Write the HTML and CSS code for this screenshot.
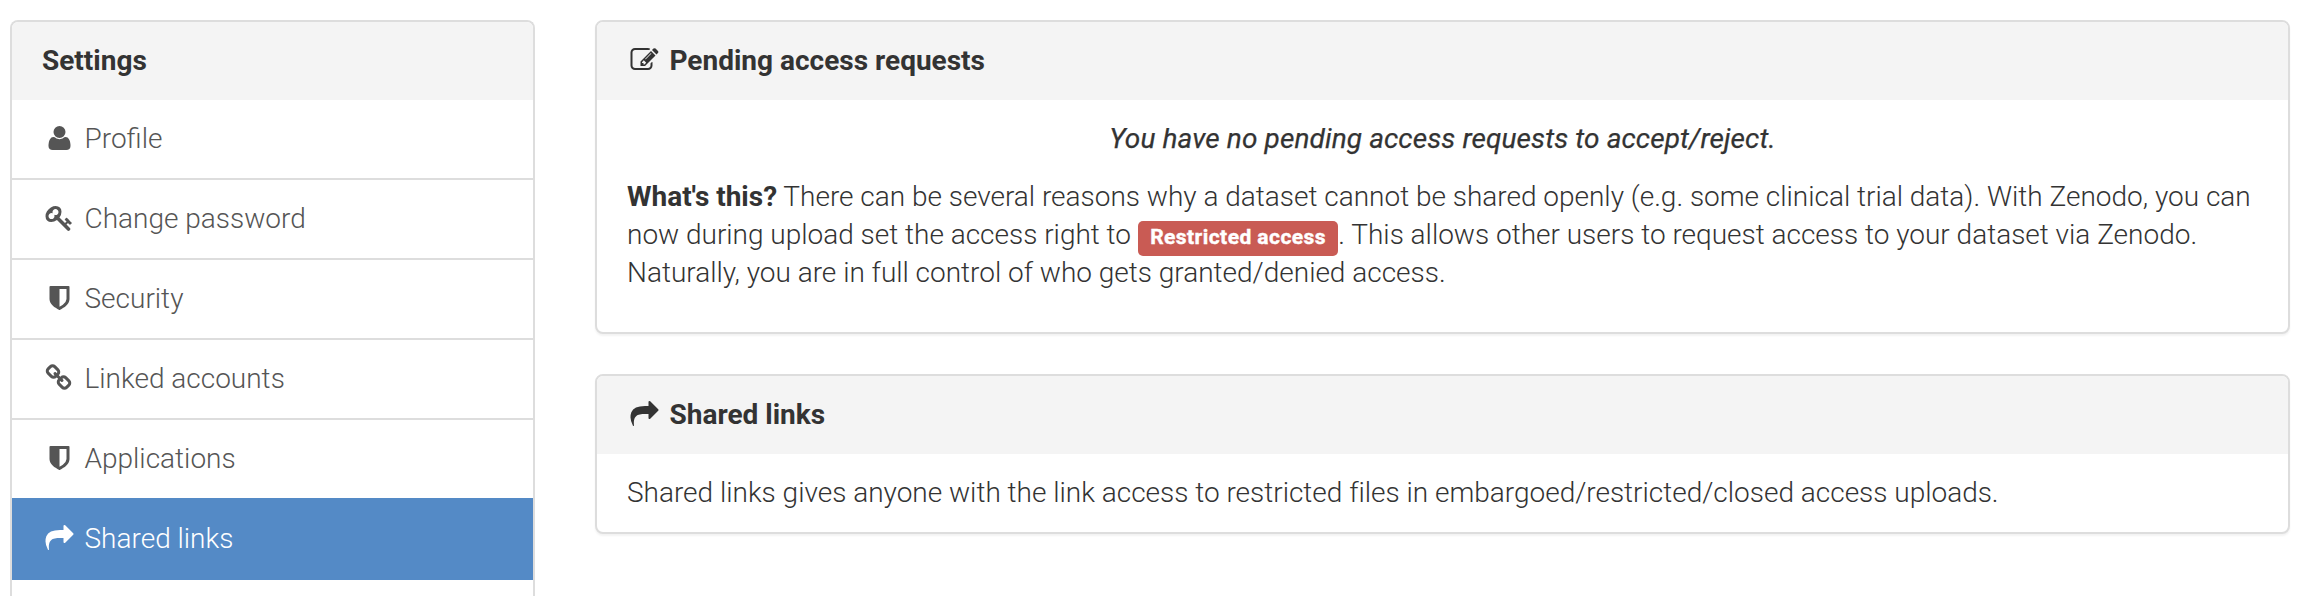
FILE: index.html
```html
<!DOCTYPE html>
<html lang="en">
<head>
<meta charset="utf-8">
<title>Shared links</title>
<link rel="stylesheet" href="styles.css">
</head>
<body>
<svg class="sprite" aria-hidden="true">
  <symbol id="user" viewBox="0 0 1792 1792"><path d="M1600 1405q0 120-73 189.500t-194 69.500h-874q-121 0-194-69.500t-73-189.500q0-53 3.500-103.500t14-109 26.500-108.500 43-97.500 62-81 85.500-53.500 111.500-20q9 0 42 21.500t74.500 48 108 48 133.500 21.500 133.500-21.500 108-48 74.500-48 42-21.500q61 0 111.500 20t85.500 53.500 62 81 43 97.500 26.500 108.500 14 109 3.500 103.500zm-320-893q0 159-112.500 271.500t-271.500 112.500-271.500-112.500-112.500-271.500 112.500-271.500 271.500-112.500 271.500 112.500 112.500 271.500z"/></symbol>
  <symbol id="key" viewBox="0 0 1792 1792"><path d="M832 512q0-80-56-136t-136-56-136 56-56 136q0 42 19 83-41-19-83-19-80 0-136 56t-56 136 56 136 136 56 136-56 56-136q0-42-19-83 41 19 83 19 80 0 136-56t56-136zm851 704q0 17-49 66t-66 49q-9 0-28.500-16t-36.500-33-38.500-40-24.500-26l-96 96 220 220q28 28 28 68 0 42-39 81t-81 39q-40 0-68-28l-671-671q-176 131-365 131-163 0-265.500-102.500t-102.500-265.500q0-160 95-313t248-248 313-95q163 0 265.500 102.500t102.500 265.500q0 189-131 365l355 355 96-96q-3-3-26-24.500t-40-38.500-33-36.500-16-28.500q0-17 49-66t66-49q13 0 23 10 6 6 46 44.500t82 79.500 86.500 86 73 78 28.500 41z"/></symbol>
  <symbol id="shield" viewBox="0 0 1792 1792"><path d="M1344 960v-640h-448v1137q119-63 213-137 235-184 235-360zm192-768v768q0 86-33.500 170.500t-83 150-118 127.500-126.500 103-121 77.500-89.500 49.500-42.500 20q-12 6-26 6t-26-6q-16-7-42.500-20t-89.500-49.500-121-77.500-126.500-103-118-127.500-83-150-33.500-170.500v-768q0-26 19-45t45-19h1152q26 0 45 19t19 45z"/></symbol>
  <symbol id="link" viewBox="0 0 1792 1792"><path d="M1456 1216q0-40-28-68l-208-208q-28-28-68-28-42 0-72 32 3 3 19 18.500t21.500 21.500 15 19 13 25.500 3.500 27.500q0 40-28 68t-68 28q-15 0-27.500-3.500t-25.500-13-19-15-21.500-21.500-18.500-19q-33 31-33 73 0 40 28 68l206 207q27 27 68 27 40 0 68-26l147-146q28-28 28-67zm-703-705q0-40-28-68l-206-207q-28-28-68-28-39 0-68 27l-147 146q-28 28-28 67 0 40 28 68l208 208q27 27 68 27 42 0 72-31-3-3-19-18.500t-21.500-21.500-15-19-13-25.500-3.500-27.500q0-40 28-68t68-28q15 0 27.500 3.500t25.500 13 19 15 21.500 21.500 18.500 19q33-31 33-73zm895 705q0 120-85 203l-147 146q-83 83-203 83-121 0-204-85l-206-207q-83-83-83-203 0-123 88-209l-88-88q-86 88-208 88-120 0-204-84l-208-208q-84-84-84-204t85-203l147-146q83-83 203-83 121 0 204 85l206 207q83 83 83 203 0 123-88 209l88 88q86-88 208-88 120 0 204 84l208 208q84 84 84 204z"/></symbol>
  <symbol id="share" viewBox="0 0 1792 1792"><path d="M1792 640q0 26-19 45l-512 512q-19 19-45 19t-45-19-19-45v-256h-224q-98 0-175.500 6t-154 21.500-133 42.500-105.500 69.500-80 101-48.500 138.500-17.500 181q0 55 5 123 0 6 2.500 23.500t2.500 26.500q0 15-8.500 25t-23.500 10q-16 0-28-17-7-9-13-22t-13.500-30-10.500-24q-127-285-127-451 0-199 53-333 162-403 875-403h224v-256q0-26 19-45t45-19 45 19l512 512q19 19 19 45z"/></symbol>
  <symbol id="edit" viewBox="0 0 1792 1792"><path d="M888 1184l116-116-152-152-116 116v56h96v96h56zm440-720q-16-16-33 1l-350 350q-17 17-1 33t33-1l350-350q17-17 1-33zm80 594v190q0 119-84.500 203.500t-203.500 84.500h-832q-119 0-203.500-84.500t-84.500-203.500v-832q0-119 84.500-203.500t203.500-84.500h832q63 0 117 25 15 7 18 23 3 17-9 29l-49 49q-14 14-32 8-23-6-45-6h-832q-66 0-113 47t-47 113v832q0 66 47 113t113 47h832q66 0 113-47t47-113v-126q0-13 9-22l64-64q15-15 35-7t20 29zm-96-738l288 288-672 672h-288v-288zm444 132l-92 92-288-288 92-92q28-28 68-28t68 28l152 152q28 28 28 68t-28 68z"/></symbol>
</svg>
<div class="page">
  <nav class="panel sidebar">
    <h2 class="panel-heading">Settings</h2>
    <ul class="menu">
      <li class="menu-item"><svg class="icon"><use href="#user"/></svg>Profile</li>
      <li class="menu-item"><svg class="icon"><use href="#key"/></svg>Change password</li>
      <li class="menu-item"><svg class="icon"><use href="#shield"/></svg>Security</li>
      <li class="menu-item"><svg class="icon"><use href="#link"/></svg>Linked accounts</li>
      <li class="menu-item"><svg class="icon"><use href="#shield"/></svg>Applications</li>
      <li class="menu-item active"><svg class="icon"><use href="#share"/></svg>Shared links</li>
    </ul>
  </nav>
  <main class="content">
    <section class="panel">
      <h2 class="panel-heading"><svg class="icon"><use href="#edit"/></svg>Pending access requests</h2>
      <div class="panel-body">
        <p class="empty">You have no pending access requests to accept/reject.</p>
        <p class="help"><strong>What's this?</strong> There can be several reasons why a dataset cannot be shared openly (e.g. some clinical trial data). With Zenodo, you can now during upload set the access right to <span class="label">Restricted access</span>. This allows other users to request access to your dataset via Zenodo. Naturally, you are in full control of who gets granted/denied access.</p>
      </div>
    </section>
    <section class="panel">
      <h2 class="panel-heading"><svg class="icon"><use href="#share"/></svg>Shared links</h2>
      <div class="panel-body">Shared links gives anyone with the link access to restricted files in embargoed/restricted/closed access uploads.</div>
    </section>
  </main>
</div>
</body>
</html>
```
FILE: styles.css
```css
* { box-sizing: border-box; }
body {
  margin: 0;
  background: #fff;
  color: #333;
  font: 300 28px/38px Roboto, "Liberation Sans", sans-serif;
}
.sprite { display: none; }
.page {
  display: flex;
  align-items: flex-start;
  gap: 60px;
  height: 596px;
  padding: 20px 18px 0 10px;
}
.sidebar {
  flex: 0 0 525px;
  align-self: stretch;
}
.content {
  flex: 1;
  display: flex;
  flex-direction: column;
  gap: 40px;
}
.panel {
  border: 2px solid #ddd;
  border-radius: 8px;
  background: #fff;
  box-shadow: 0 2px 2px rgba(0, 0, 0, .05);
}
.panel.sidebar {
  border-bottom: 0;
  border-radius: 8px 8px 0 0;
  box-shadow: none;
}
.panel-heading {
  display: flex;
  margin: 0;
  padding: 20px 30px;
  border-radius: 6px 6px 0 0;
  background: #f4f4f4;
  font-size: 28px;
  font-weight: 700;
}
.icon {
  flex: none;
  width: 35px;
  height: 28px;
  margin: 4px 7.500px 0 0;
  fill: currentColor;
}
.menu {
  margin: 0;
  padding: 0;
  list-style: none;
}
.menu-item {
  display: flex;
  height: 80px;
  padding: 20px 30px;
  border-bottom: 2px solid #ddd;
  color: #555;
}
.menu-item.active {
  height: 82px;
  margin-top: -2px;
  padding-top: 22px;
  border: 0;
  background: #548ac6;
  color: #fff;
}
.panel-body {
  padding: 20px 30px;
  letter-spacing: -.01px;
}
.empty, .help { margin: 0 0 20px; }
.empty {
  text-align: center;
  font-style: italic;
  font-weight: 400;
  letter-spacing: .11px;
  -webkit-text-stroke: .25px #333;
}
strong { font-weight: 700; }
.label {
  padding: 4.200px 12.300px 7px;
  border-radius: 5px;
  background: #c95b54;
  color: #fff;
  font-size: 21px;
  font-weight: 700;
  line-height: 1;
  letter-spacing: .44px;
  -webkit-text-stroke: .4px #fff;
}
```
